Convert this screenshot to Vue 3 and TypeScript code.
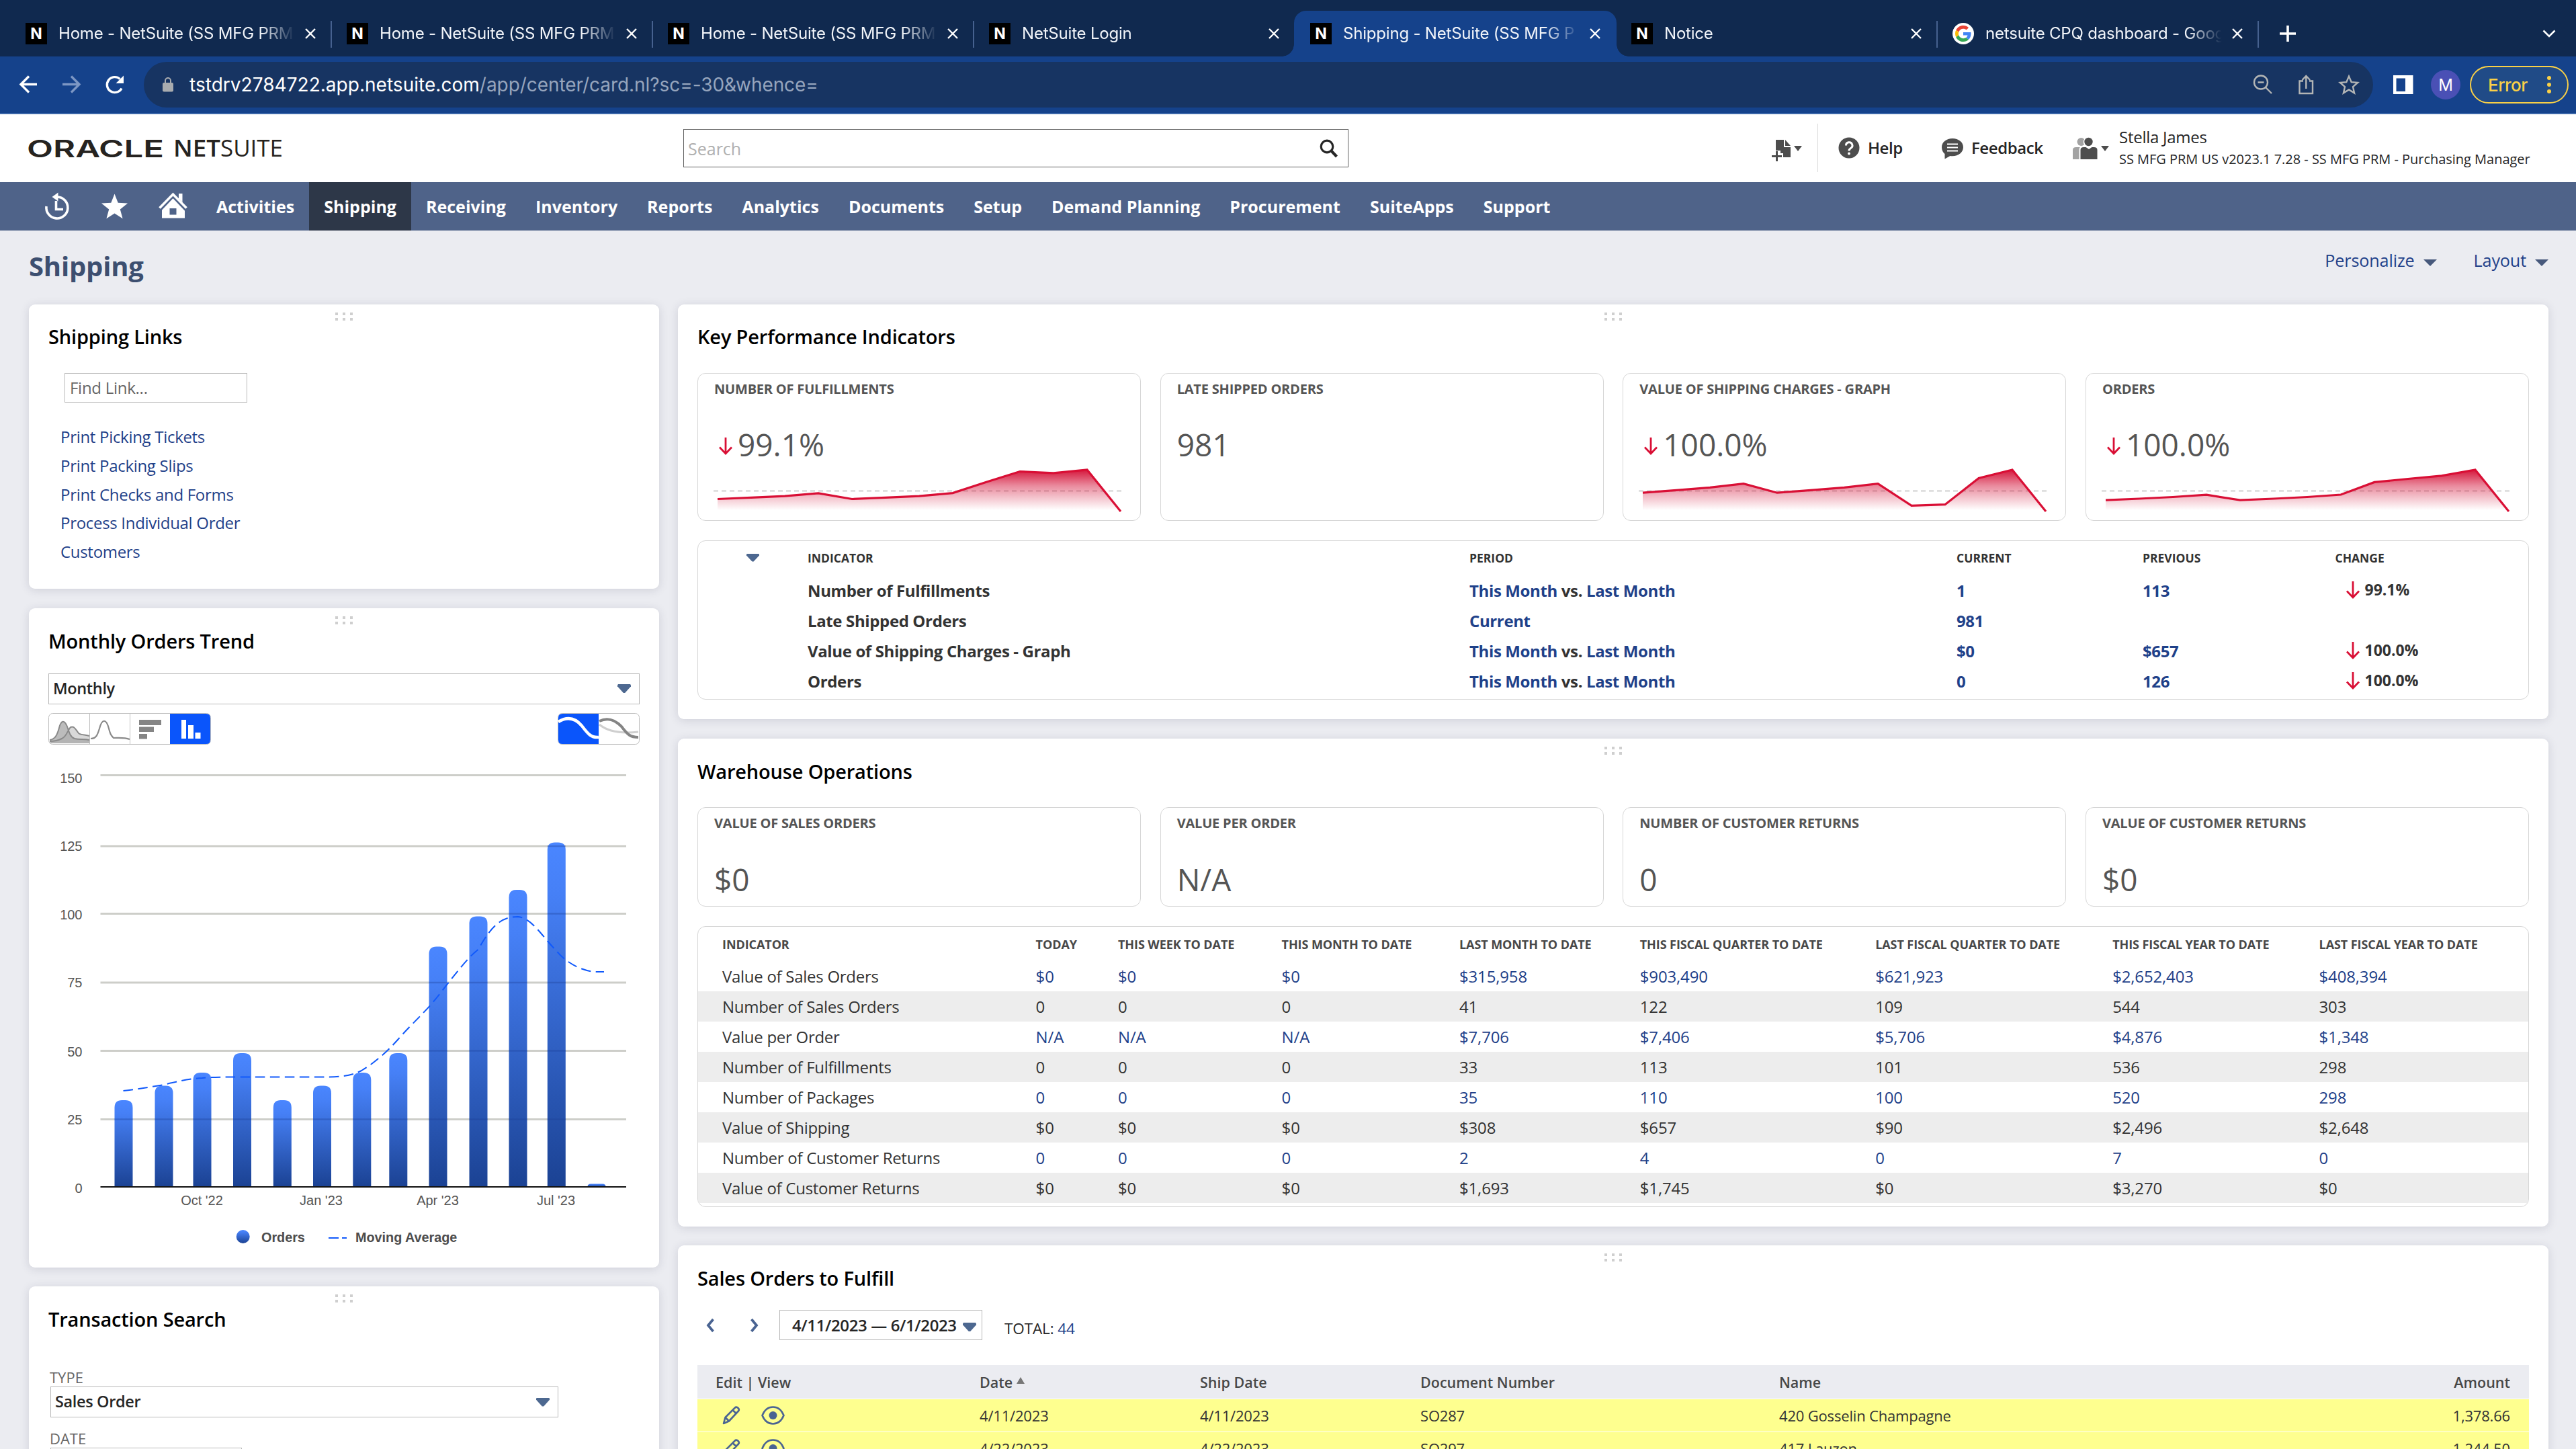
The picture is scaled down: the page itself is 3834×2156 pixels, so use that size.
<script setup lang="ts">
interface Tab { title: string; kind: 'n' | 'g'; active?: boolean; sep?: boolean }
const tabs: Tab[] = [
  { title: 'Home - NetSuite (SS MFG PRM', kind: 'n', sep: true },
  { title: 'Home - NetSuite (SS MFG PRM', kind: 'n', sep: true },
  { title: 'Home - NetSuite (SS MFG PRM', kind: 'n', sep: true },
  { title: 'NetSuite Login', kind: 'n' },
  { title: 'Shipping - NetSuite (SS MFG P', kind: 'n', active: true },
  { title: 'Notice', kind: 'n', sep: true },
  { title: 'netsuite CPQ dashboard - Goog', kind: 'g', sep: true },
]

const menu = ['Activities', 'Shipping', 'Receiving', 'Inventory', 'Reports', 'Analytics', 'Documents', 'Setup', 'Demand Planning', 'Procurement', 'SuiteApps', 'Support']
const links = ['Print Picking Tickets', 'Print Packing Slips', 'Print Checks and Forms', 'Process Individual Order', 'Customers']

/* Bar chart geometry: y is the grid line, ly the label baseline */
const gridLines = [
  { v: 150, y: 1153.5, ly: 1164.5 }, { v: 125, y: 1259, ly: 1265.5 }, { v: 100, y: 1359.5, ly: 1367.5 }, { v: 75, y: 1462, ly: 1468.5 },
  { v: 50, y: 1563.5, ly: 1571.5 }, { v: 25, y: 1665.5, ly: 1673 },
]
const bars = [
  [184, 1637], [244, 1615.5], [301, 1596], [360.5, 1567], [420.3, 1637], [479.5, 1615.5], [538.8, 1596],
  [592.8, 1567], [652, 1408.5], [712, 1363.5], [771, 1324], [828.3, 1253.5], [888, 1761.5],
].map(([x, y]) => ({ x, y }))
const barPath = (x: number, y: number): string => {
  const r = Math.min(11, 1766 - y)
  return `M${x - 13.5} 1766V${y + r}q0 ${-r} ${r} ${-r}h${27 - 2 * r}q${r} 0 ${r} ${r}V1766z`
}
const trend = 'M183.5 1623C204 1621 224 1617 244 1614C264 1609 282 1605 301 1604C315 1602.5 335 1602.5 360 1602.5H480C505 1602.5 520 1602 538 1593C558 1581 575 1566 592.5 1546.5C613 1523 634 1505 652 1482C680 1446 697 1424 712 1412.5C735 1370 752 1364 771 1364C792 1366 808 1395 828 1414.5C845 1436 872 1446 888 1446H899'
const xLabels = [{ t: "Oct '22", x: 300.5 }, { t: "Jan '23", x: 478 }, { t: "Apr '23", x: 651.5 }, { t: "Jul '23", x: 827.5 }]

/* KPI cards */
interface Kpi { title: string; value: string; down?: boolean; ys?: number[] }
const kpis: Kpi[] = [
  { title: 'NUMBER OF FULFILLMENTS', value: '99.1%', down: true, ys: [186.5, 184.4, 182.1, 177.8, 186.5, 184.4, 182.1, 177.6, 161.2, 145.5, 147.8, 143, 205] },
  { title: 'LATE SHIPPED ORDERS', value: '981' },
  { title: 'VALUE OF SHIPPING CHARGES - GRAPH', value: '100.0%', down: true, ys: [177.2, 173.4, 169.4, 163.7, 177.2, 173.4, 169.4, 163.7, 196.3, 194.7, 155.5, 143, 205] },
  { title: 'ORDERS', value: '100.0%', down: true, ys: [188.2, 186, 183.5, 180.2, 188.2, 186, 183.5, 180, 161.4, 156.5, 151.8, 143, 205] },
]
const sparkPoints = (ys: number[]): string => ys.map((y, i) => `${30 + i * 50},${y}`).join(' ')

const kpiRows = [
  { name: 'Number of Fulfillments', vs: true, cur: '1', prev: '113', chg: '99.1%' },
  { name: 'Late Shipped Orders', vs: false, cur: '981', prev: '', chg: '' },
  { name: 'Value of Shipping Charges - Graph', vs: true, cur: '$0', prev: '$657', chg: '100.0%' },
  { name: 'Orders', vs: true, cur: '0', prev: '126', chg: '100.0%' },
]

const whCards = [
  { title: 'VALUE OF SALES ORDERS', value: '$0' },
  { title: 'VALUE PER ORDER', value: 'N/A' },
  { title: 'NUMBER OF CUSTOMER RETURNS', value: '0' },
  { title: 'VALUE OF CUSTOMER RETURNS', value: '$0' },
]
const whHead = ['INDICATOR', 'TODAY', 'THIS WEEK TO DATE', 'THIS MONTH TO DATE', 'LAST MONTH TO DATE', 'THIS FISCAL QUARTER TO DATE', 'LAST FISCAL QUARTER TO DATE', 'THIS FISCAL YEAR TO DATE', 'LAST FISCAL YEAR TO DATE']
const whRows = [
  ['Value of Sales Orders', '$0', '$0', '$0', '$315,958', '$903,490', '$621,923', '$2,652,403', '$408,394'],
  ['Number of Sales Orders', '0', '0', '0', '41', '122', '109', '544', '303'],
  ['Value per Order', 'N/A', 'N/A', 'N/A', '$7,706', '$7,406', '$5,706', '$4,876', '$1,348'],
  ['Number of Fulfillments', '0', '0', '0', '33', '113', '101', '536', '298'],
  ['Number of Packages', '0', '0', '0', '35', '110', '100', '520', '298'],
  ['Value of Shipping', '$0', '$0', '$0', '$308', '$657', '$90', '$2,496', '$2,648'],
  ['Number of Customer Returns', '0', '0', '0', '2', '4', '0', '7', '0'],
  ['Value of Customer Returns', '$0', '$0', '$0', '$1,693', '$1,745', '$0', '$3,270', '$0'],
]
const orders = [
  ['4/11/2023', '4/11/2023', 'SO287', '420 Gosselin Champagne', '1,378.66'],
  ['4/22/2023', '4/22/2023', 'SO297', '417 Lauzon', '1,244.50'],
]
</script>

<template>
  <div class="page">
    <!-- Browser chrome -->
    <div class="tabstrip">
      <div v-for="(t, i) in tabs" :key="i" class="tab" :class="{ active: t.active, sep: t.sep }">
        <span v-if="t.kind === 'n'" class="fav">N</span>
        <svg v-else class="gfav" viewBox="0 0 32 32">
          <circle cx="16" cy="16" r="16" fill="#fff" />
          <g transform="translate(4 4) scale(.5)">
            <path fill="#EA4335" d="M24 9.5c3.54 0 6.71 1.22 9.21 3.6l6.85-6.85C35.9 2.38 30.47 0 24 0 14.62 0 6.51 5.38 2.56 13.22l7.98 6.19C12.43 13.72 17.74 9.5 24 9.5z" />
            <path fill="#4285F4" d="M46.98 24.55c0-1.57-.15-3.09-.38-4.55H24v9.02h12.94c-.58 2.96-2.26 5.48-4.78 7.18l7.73 6c4.51-4.18 7.09-10.36 7.09-17.65z" />
            <path fill="#FBBC05" d="M10.53 28.59c-.48-1.45-.76-2.99-.76-4.59s.27-3.14.76-4.59l-7.98-6.19C.92 16.46 0 20.12 0 24c0 3.88.92 7.54 2.56 10.78l7.97-6.19z" />
            <path fill="#34A853" d="M24 48c6.48 0 11.93-2.13 15.89-5.81l-7.73-6c-2.15 1.45-4.92 2.3-8.16 2.3-6.26 0-11.57-4.22-13.47-9.91l-7.98 6.19C6.51 42.62 14.62 48 24 48z" />
          </g>
        </svg>
        <span class="ttl">{{ t.title }}</span>
        <svg class="x" viewBox="0 0 16 16"><path d="M1 1l14 14M15 1L1 15" stroke="#fff" stroke-width="2.4" /></svg>
      </div>
      <svg class="plus" viewBox="0 0 26 26"><path d="M13 1v24M1 13h24" stroke="#fff" stroke-width="3.6" /></svg>
      <svg class="chev" viewBox="0 0 20 12"><path d="M1.500 1.500L10 10l8.500-8.500" fill="none" stroke="#fff" stroke-width="2.600" /></svg>
    </div>

    <div class="toolbar">
      <svg class="navbtns" viewBox="0 0 214 84">
        <g fill="none" stroke-width="3.4">
          <path d="M55 41.500H31M43 29.500L31 41.500l12 12" stroke="#fff" />
          <path d="M93 41.500h25M106 29.500l12 12-12 12" stroke="#7d97c4" />
          <path d="M181 47.500A11.500 11.500 0 1 1 178.500 33.500" stroke="#fff" />
        </g>
        <path d="M184 28.500v11.500h-11.500z" fill="#fff" />
      </svg>
      <div class="omni">
        <svg class="lock" viewBox="0 0 16 22"><rect y="8" width="16" height="13.500" rx="2" fill="#a9acaf" /><path d="M4 9V5a4 4 0 0 1 8 0v4" fill="none" stroke="#a9acaf" stroke-width="2" /></svg>
        <span class="url">tstdrv2784722.app.netsuite.com<i>/app/center/card.nl?sc=-30&amp;whence=</i></span>
        <svg class="omni-icons" viewBox="0 0 162 32">
          <g fill="none" stroke="#b3b5b5" stroke-width="2.400">
            <circle cx="14" cy="12.500" r="10" /><path d="M21 20l9 9M9.500 12.500h9" />
            <path d="M77 10.500h-5.500v18.500h19.500V10.500H86M81.300 22V3.500M75.500 9l5.800-6 5.800 6" />
            <path d="M145 3.500l3.700 8.700 9.400.8-7.100 6.200 2.100 9.200-8.100-4.900-8.100 4.900 2.100-9.200-7.100-6.200 9.400-.8z" />
          </g>
        </svg>
      </div>
      <svg class="panel" viewBox="0 0 30 28"><path d="M0 0h29.500v28H0zM4.500 4.500v19.500h13.500V4.500z" fill="#fff" fill-rule="evenodd" /></svg>
      <span class="avatar">M</span>
      <span class="error">Error<svg viewBox="0 0 6 28"><circle cx="3" cy="4" r="3" /><circle cx="3" cy="14" r="3" /><circle cx="3" cy="24" r="3" /></svg></span>
    </div>

    <!-- Application header -->
    <header class="apphead">
      <svg class="logo" viewBox="0 0 400 40">
        <g fill="#262320">
          <text x="-1" y="33.500" class="oracle" textLength="204" lengthAdjust="spacingAndGlyphs">ORACLE</text>
          <text x="217" y="33" class="net" textLength="70" lengthAdjust="spacingAndGlyphs">NET</text>
          <text x="287" y="33" class="suite" textLength="93" lengthAdjust="spacingAndGlyphs">SUITE</text>
        </g>
      </svg>
      <div class="search">
        <span>Search</span>
        <svg viewBox="0 0 28 28"><circle cx="11" cy="11" r="8.800" fill="none" stroke="#262626" stroke-width="3.200" /><path d="M17 17l8.500 9" stroke="#262626" stroke-width="4.200" /></svg>
      </div>
      <div class="quick">
        <svg class="q-new" viewBox="0 0 46 34">
          <path d="M6 1h12v11h10v15H17v-6h-4v-4H6z" fill="#4d4d4d" /><path d="M20 1l8 9h-8z" fill="#4d4d4d" />
          <path d="M7.500 18v15M0 25.500h15" stroke="#4d4d4d" stroke-width="3" /><path d="M33 10h12l-6 8z" fill="#4d4d4d" />
        </svg>
        <i class="vline"></i>
        <svg class="q-help" viewBox="0 0 32 32"><circle cx="16" cy="16" r="15.500" fill="#4d4d4d" /><path d="M11.500 12.500a4.700 4.700 0 1 1 7 4c-1.800 1.200-2.500 2-2.500 4" fill="none" stroke="#fff" stroke-width="3" /><circle cx="16" cy="24.500" r="2" fill="#fff" /></svg>
        <span class="q-txt q-h">Help</span>
        <svg class="q-fb" viewBox="0 0 34 32"><path d="M17 1C8 1 1 6.500 1 14c0 4.500 2 8 4.500 10v7.500l8-4.500c1 .2 2 .3 3.500.3 9 0 16-5.800 16-13.300S26 1 17 1z" fill="#4d4d4d" /><path d="M9 9.500h16M9 14.500h16M9 19.500h16" stroke="#fff" stroke-width="2" /></svg>
        <span class="q-txt q-f">Feedback</span>
        <svg class="q-ppl" viewBox="0 0 56 34">
          <circle cx="12.500" cy="7" r="6" fill="#a3a3a3" /><path d="M0 33V19q0-4 5-4h10v18z" fill="#a3a3a3" />
          <circle cx="23.500" cy="7.500" r="7.800" fill="#fff" /><path d="M9.500 34V19q0-6 6-6h20v21z" fill="#fff" />
          <circle cx="23.500" cy="7" r="6.200" fill="#4d4d4d" /><path d="M11.500 33V19q0-4 5-4h3l4.500 3 4.500-3h3q5 0 5 4v14z" fill="#4d4d4d" />
          <path d="M42 13h12l-6 8z" fill="#4d4d4d" />
        </svg>
        <div class="who"><span>Stella James</span><span class="role">SS MFG PRM US v2023.1 7.28 - SS MFG PRM - Purchasing Manager</span></div>
      </div>
    </header>

    <nav class="menu">
      <svg class="m-icons" viewBox="0 0 300 72">
        <path d="M69 36A16 16 0 1 0 85.500 22" fill="none" stroke="#fff" stroke-width="3.600" />
        <path d="M77.500 22l9-6.500v13z" fill="#fff" /><path d="M83.500 28v12.500H94" fill="none" stroke="#fff" stroke-width="3.600" />
        <path d="M170.500 17.500l5.200 13.300 14.300.7-11.200 8.900 3.800 13.800-12.100-7.800-12.100 7.800 3.800-13.800L151 31.500l14.300-.7z" fill="#fff" />
        <path d="M257.500 21.500L275 40v13.500H241V40z" fill="#fff" /><path d="M237.500 40l20-21 20 21" fill="none" stroke="#4f6389" stroke-width="7" /><path d="M237.500 38.500l20-20.500 20 20.500" fill="none" stroke="#fff" stroke-width="3.600" /><path d="M266 17h5.500v13l-5.500-5.500z" fill="#fff" /><path d="M252.500 39h10v9.500h-10z" fill="#4f6389" />
      </svg>
      <span v-for="m in menu" :key="m" class="mi" :class="{ on: m === 'Shipping' }">{{ m }}</span>
    </nav>

    <div class="titlebar">
      <h1>Shipping</h1>
      <span class="tb">Personalize<svg viewBox="0 0 20 10"><path d="M0 0h20L10 10z" fill="#47597c" /></svg></span>
      <span class="tb">Layout<svg viewBox="0 0 20 10"><path d="M0 0h20L10 10z" fill="#47597c" /></svg></span>
    </div>

    <main class="cols">
      <div class="col left">
        <section class="card c-links">
          <i class="grip"></i>
          <h2>Shipping Links</h2>
          <div class="find">Find Link...</div>
          <a v-for="l in links" :key="l">{{ l }}</a>
        </section>

        <section class="card c-trend">
          <i class="grip"></i>
          <h2>Monthly Orders Trend</h2>
          <div class="select"><b>Monthly</b><i class="dd"></i></div>
          <div class="btns">
            <svg class="b4" viewBox="0 0 242 47">
              <rect x=".5" y=".5" width="241" height="46" rx="6" fill="#fff" stroke="#bfbfbf" />
              <path d="M2 40C10 39 13 33 16 22c3-12 8-12 12-2 3 9 5 16 11 18 8 2 14 0 22 2v5H3z" fill="#bcbcbc" />
              <path d="M2 42c10 0 14-2 18-4 8-4 8-12 13-17 6-2 8 4 12 9 4 3 10 2 16 4v11H4z" fill="#aaa" fill-opacity=".45" />
              <path d="M2 40C10 39 13 33 16 22c3-12 8-12 12-2 3 9 5 16 11 18 8 2 14 0 22 2M2 42c10 0 14-2 18-4 8-4 8-12 13-17 6-2 8 4 12 9 4 3 10 2 16 4" fill="none" stroke="#8a8a8a" stroke-width="2" />
              <path d="M63 38c8 0 10-5 13-15 4-15 10-15 14 0 2 8 3 10 7 14 8 0 16-1 24 2" fill="none" stroke="#8a8a8a" stroke-width="2.200" />
              <path d="M61.500 1v45M121.500 1v45" stroke="#bfbfbf" />
              <path d="M135 10h33v8h-33zM135 20.500h22v7.500h-22zM135 31h12v7.500h-12z" fill="#858585" />
              <path d="M181 1h54q6 0 6 6v33q0 6-6 6h-54z" fill="#0a55fb" />
              <path d="M198 10h7v28h-7zM208 18h8v20h-8zM218.500 29h8v9h-8z" fill="#fff" />
            </svg>
            <svg class="b2" viewBox="0 0 122 47">
              <rect x=".5" y=".5" width="121" height="46" rx="6" fill="#fff" stroke="#bfbfbf" />
              <path d="M61 1H7q-6 0-6 6v33q0 6 6 6h54z" fill="#0a55fb" />
              <path d="M1 13c13-8 25-6 35 6 9 12 14 18 25 17" fill="none" stroke="#fff" stroke-width="4.500" />
              <path d="M62 17c12 10 30 14 58 11" fill="none" stroke="#cfcfcf" stroke-width="3" />
              <path d="M62 12c13-6 23-2 33 8 9 12 13 16 25 16" fill="none" stroke="#858585" stroke-width="4" />
            </svg>
          </div>
          <svg class="chart" viewBox="43 1120 938 766">
            <defs>
              <linearGradient id="bar" x1="0" y1="0" x2="0" y2="1"><stop offset="0" stop-color="#4a86ff" /><stop offset=".15" stop-color="#4680f6" /><stop offset="1" stop-color="#1b4293" /></linearGradient>
            </defs>
            <g v-for="g in gridLines" :key="g.v">
              <path :d="`M149.500 ${g.y}H932`" stroke="#cdcec9" stroke-width="3" />
              <text x="122.500" :y="g.ly" text-anchor="end" class="ax">{{ g.v }}</text>
            </g>
            <text x="122.500" y="1774.500" text-anchor="end" class="ax">0</text>
            <path v-for="b in bars" :key="b.x" :d="barPath(b.x, b.y)" fill="url(#bar)" />
            <template v-for="b in bars" :key="'o' + b.x">
              <template v-for="g in gridLines" :key="g.v">
                <path v-if="g.y > b.y + 4" :d="`M${b.x - 13.5} ${g.y}h27`" stroke="#1d3f94" stroke-opacity=".35" stroke-width="2.500" />
              </template>
            </template>
            <path d="M149.500 1766H932" stroke="#111" stroke-width="2.200" />
            <path :d="trend" fill="none" stroke="#1059fb" stroke-width="2" stroke-dasharray="14.500 7.500" />
            <text v-for="l in xLabels" :key="l.t" :x="l.x" y="1792.500" text-anchor="middle" class="ax">{{ l.t }}</text>
            <circle cx="361.700" cy="1840" r="10" fill="url(#bar)" />
            <text x="389" y="1848" class="lg">Orders</text>
            <path d="M489 1842h27" stroke="#1059fb" stroke-width="2" stroke-dasharray="15 5" />
            <text x="529" y="1848" class="lg">Moving Average</text>
          </svg>
        </section>

        <section class="card c-tran">
          <i class="grip"></i>
          <h2>Transaction Search</h2>
          <label class="first">TYPE</label>
          <div class="select"><b>Sales Order</b><i class="dd"></i></div>
          <label class="second">DATE</label>
          <div class="date"></div>
        </section>
      </div>

      <div class="col right">
        <section class="card c-kpi">
          <i class="grip"></i>
          <h2>Key Performance Indicators</h2>
          <div class="kgrid tall">
            <div v-for="k in kpis" :key="k.title" class="kcard">
              <h3>{{ k.title }}</h3>
              <div class="val"><svg v-if="k.down" viewBox="0 0 20 26"><path d="M10 0v24M1 14.500l9 9.500 9-9.500" fill="none" stroke="#d90f35" stroke-width="2.800" /></svg>{{ k.value }}</div>
              <svg v-if="k.ys" class="spark" viewBox="0 135 660 83">
                <defs><linearGradient id="rf" gradientUnits="userSpaceOnUse" x1="0" y1="143" x2="0" y2="203"><stop offset="0" stop-color="#d5183d" /><stop offset=".4" stop-color="#d5183d" stop-opacity=".5" /><stop offset="1" stop-color="#d5183d" stop-opacity="0" /></linearGradient></defs>
                <path d="M24 174.500H636" stroke="#cfcfcf" stroke-width="2.200" stroke-dasharray="7 5" />
                <polygon :points="`30,205 ${sparkPoints(k.ys)}`" fill="url(#rf)" />
                <polyline :points="sparkPoints(k.ys)" fill="none" stroke="#d90f35" stroke-width="3.200" />
              </svg>
            </div>
          </div>
          <div class="ktable">
            <div class="kr kh"><i class="dd"></i><span>INDICATOR</span><span>PERIOD</span><span>CURRENT</span><span>PREVIOUS</span><span>CHANGE</span></div>
            <div v-for="r in kpiRows" :key="r.name" class="kr">
              <i></i><span>{{ r.name }}</span>
              <span v-if="r.vs"><em>This Month</em> <b class="vs">vs.</b> <em>Last Month</em></span><span v-else><em>Current</em></span>
              <em>{{ r.cur }}</em><em>{{ r.prev }}</em>
              <span class="chg"><template v-if="r.chg"><svg viewBox="0 0 20 26"><path d="M10 0v24M1 14.500l9 9.500 9-9.500" fill="none" stroke="#d90f35" stroke-width="2.800" /></svg>{{ r.chg }}</template></span>
            </div>
          </div>
        </section>

        <section class="card c-wh">
          <i class="grip"></i>
          <h2>Warehouse Operations</h2>
          <div class="kgrid">
            <div v-for="k in whCards" :key="k.title" class="kcard"><h3>{{ k.title }}</h3><div class="val">{{ k.value }}</div></div>
          </div>
          <div class="wtable">
            <div class="wr wh"><span v-for="h in whHead" :key="h">{{ h }}</span></div>
            <div v-for="(r, i) in whRows" :key="i" class="wr" :class="{ odd: i % 2 }"><span v-for="(c, j) in r" :key="j" :class="{ lk: i % 2 === 0 && j > 0, name: j === 0 }">{{ c }}</span></div>
          </div>
        </section>

        <section class="card c-so">
          <i class="grip"></i>
          <h2>Sales Orders to Fulfill</h2>
          <div class="pager">
            <svg viewBox="0 0 80 20"><path d="M10.500 1l-7.500 9 7.500 9M67.500 1l7.500 9-7.500 9" fill="none" stroke="#4a6492" stroke-width="3.800" /></svg>
            <div class="range"><b>4/11/2023 — 6/1/2023</b><i class="dd"></i></div>
            <span class="total">TOTAL: <a>44</a></span>
          </div>
          <div class="sr sh"><span>Edit | View</span><span>Date<i class="up"></i></span><span>Ship Date</span><span>Document Number</span><span>Name</span><span class="amt">Amount</span></div>
          <div v-for="o in orders" :key="o[2]" class="sr">
            <svg class="ev" viewBox="0 0 96 28">
              <g fill="none" stroke="#4a6492" stroke-width="2.600" stroke-linejoin="round"><path d="M2 26l2.500-9L19 2.500q2-2 4.500.5 2.500 2.500.5 4.500L10 22.500zM15.500 6l6 6M4.500 17l5.500 5.500" /><path d="M59.500 14C63 5.500 69 1.500 75.500 1.500S88 5.500 91.500 14C88 22.500 82 26.500 75.500 26.500S63 22.500 59.500 14z" /></g>
              <circle cx="75.500" cy="14" r="6" fill="#4a6492" />
            </svg>
            <span v-for="(c, j) in o" :key="j" :class="{ amt: j === 4 }">{{ c }}</span>
          </div>
        </section>
      </div>
    </main>
  </div>
</template>

<style>
body { margin: 0; overflow: hidden; }
</style>

<style scoped>
* { box-sizing: border-box; }
i { font-style: normal; }
em { font-style: normal; color: #1f4189; }
.page { width: 3834px; height: 2156px; overflow: hidden; background: #ebecf1; font-family: "Open Sans", "Noto Sans", sans-serif; color: #333; display: flex; flex-direction: column; white-space: nowrap; }
.page > * { flex: none; }
svg { display: block; flex: none; overflow: visible; }

.tabstrip { height: 84px; background: #10294f; display: flex; padding: 16px 30px 0 15px; font-family: Inter, Roboto, sans-serif; }
.tab { width: 478px; height: 68px; display: flex; align-items: center; padding-left: 23px; position: relative; flex: none; color: #f1f4f9; }
.tab.sep::after { content: ""; position: absolute; right: -1px; top: 15px; width: 2px; height: 40px; background: #46618f; }
.tab.active { background: #15428b; border-radius: 18px 18px 0 0; width: 480px; margin-left: -1px; margin-right: -1px; padding-left: 24px; }
.tab.active::before, .tab.active::after { content: ""; position: absolute; bottom: 0; width: 18px; height: 18px; background: radial-gradient(circle at 0 0, transparent 17.5px, #15428b 18px); left: -18px; }
.tab.active::after { left: auto; right: -18px; background: radial-gradient(circle at 100% 0, transparent 17.5px, #15428b 18px); }
.fav { width: 32px; height: 32px; background: #000; color: #fff; font-weight: 700; font-size: 23px; line-height: 33px; text-align: center; flex: none; }
.gfav { width: 32px; height: 32px; }
.ttl { margin-left: 17px; width: 352px; font-size: 24px; line-height: 34px; letter-spacing: -.2px; -webkit-mask-image: linear-gradient(90deg, #000 300px, transparent 352px); mask-image: linear-gradient(90deg, #000 300px, transparent 352px); }
.x { width: 16px; height: 16px; margin-left: 15px; }
.plus { width: 26px; height: 26px; margin: 21px 0 0 31px; }
.chev { width: 20px; height: 12px; margin: 28px 0 0 auto; }

.toolbar { height: 86px; background: #15428b; border-bottom: 2px solid #3b66a8; display: flex; align-items: center; font-family: Inter, Roboto, sans-serif; }
.navbtns { width: 214px; height: 84px; }
.omni { width: 3318px; height: 68px; border-radius: 34px; background: #173462; display: flex; align-items: center; padding: 0 19px 0 28px; }
.lock { width: 16px; height: 22px; }
.url { margin-left: 24px; font-size: 28px; letter-spacing: .03px; color: #fff; line-height: 40px; }
.url i { color: #96a5bd; letter-spacing: -.06px; }
.omni-icons { width: 162px; height: 32px; margin-left: auto; }
.panel { width: 30px; height: 28px; margin-left: 30px; }
.avatar { width: 44px; height: 44px; border-radius: 50%; background: #4a50b5; color: #fff; font-size: 24px; line-height: 45px; text-align: center; margin-left: 26px; }
.error { width: 147px; height: 56px; border: 2px solid #f9d047; border-radius: 28px; background: #204b87; color: #f9d047; font-size: 26px; letter-spacing: -.5px; font-weight: 500; display: flex; align-items: center; padding: 0 24px 0 25px; justify-content: space-between; margin-left: 14px; }
.error svg { width: 6px; height: 28px; fill: #f9d047; }

.apphead { height: 101px; background: #fff; display: flex; align-items: flex-start; }
.logo { width: 400px; height: 40px; margin: 30px 0 0 41px; }
.oracle { font: 560 36px Inter, sans-serif; }
.net { font: 600 34px "Open Sans", sans-serif; }
.suite { font: 400 34px "Open Sans", sans-serif; }
.search { width: 990px; height: 57px; border: 1px solid #5e5e5e; margin: 22px 0 0 576px; display: flex; align-items: center; justify-content: space-between; padding: 0 14px 0 6px; font-size: 25px; color: #b0b0b0; }
.search svg { width: 28px; height: 28px; }
.quick { display: flex; margin-left: 630px; align-items: flex-start; }
.q-new { width: 46px; height: 34px; margin-top: 37px; }
.vline { width: 1px; height: 72px; background: #d9d9d9; margin: 14px 0 0 22px; }
.q-help { width: 32px; height: 32px; margin: 34px 12px 0 30px; }
.q-txt { font-size: 24px; font-weight: 600; letter-spacing: -.42px; line-height: 34px; margin-top: 33px; color: #262626; }
.q-h { width: 52px; }
.q-f { width: 107px; }
.q-fb { width: 34px; height: 32px; margin: 35px 11px 0 57px; }
.q-ppl { width: 56px; height: 34px; margin: 34px 13px 0 44px; }
.who { display: flex; flex-direction: column; font-size: 24px; letter-spacing: -.27px; line-height: 34px; margin-top: 17px; color: #262626; }
.who .role { font-size: 20px; line-height: 31px; letter-spacing: -.02px; }

.menu { height: 72px; background: #4f6389; display: flex; }
.m-icons { width: 300px; height: 72px; }
.mi { padding: 0 22px; color: #fff; font-weight: 700; font-size: 25px; letter-spacing: .01px; line-height: 72px; }
.mi.on { background: #2d3748; }

.titlebar { height: 110px; display: flex; padding: 0 41px 0 43px; }
h1 { margin: 26px auto 0 0; font-size: 40px; letter-spacing: -.2px; line-height: 54px; font-weight: 700; color: #3d4f70; }
.tb { font-size: 25.200px; letter-spacing: -.15px; line-height: 36px; margin: 25px 0 0 55px; color: #1f4189; display: flex; align-items: center; height: 38px; }
.tb svg { width: 20px; height: 10px; margin: 8px 0 0 13px; }

.cols { display: flex; gap: 28px; padding-left: 43px; align-items: flex-start; }
.col { display: flex; flex-direction: column; gap: 28.500px; }
.left { width: 938px; }
.right { width: 2784px; }
.card { background: #fff; border-radius: 9px; box-shadow: 0 2px 14px rgba(50, 50, 80, .15); position: relative; flex: none; overflow: clip; overflow-clip-margin: 40px; }
.grip { position: absolute; left: 50%; top: 12px; width: 26px; height: 13px; background: conic-gradient(#cfcfcf 0 0) 0 0 / 4px 4px no-repeat, conic-gradient(#cfcfcf 0 0) 11px 0 / 4px 4px no-repeat, conic-gradient(#cfcfcf 0 0) 22px 0 / 4px 4px no-repeat, conic-gradient(#cfcfcf 0 0) 0 8px / 4px 4px no-repeat, conic-gradient(#cfcfcf 0 0) 11px 8px / 4px 4px no-repeat, conic-gradient(#cfcfcf 0 0) 22px 8px / 4px 4px no-repeat; margin-left: -13px; }
h2 { margin: 0; padding: 29px 0 0 29px; font-size: 29px; letter-spacing: -.17px; line-height: 40px; font-weight: 600; color: #000; }
.c-links h2, .c-kpi h2 { padding-top: 28px; }
.dd { width: 20px; height: 13px; background: #4d6890; clip-path: polygon(5% 0, 95% 0, 100% 12%, 100% 25%, 56% 100%, 44% 100%, 0 25%, 0 12%); flex: none; }

.c-links { height: 423px; display: flex; flex-direction: column; }
.find { width: 272px; height: 44px; border: 1px solid #b8b8b8; margin: 34px 0 30px 53px; padding-left: 7px; font-size: 24px; letter-spacing: -.27px; line-height: 42px; color: #666; }
.c-links a { margin-left: 47px; font-size: 24px; letter-spacing: -.3px; line-height: 42.800px; color: #1f4189; }

.c-trend { height: 981px; }
.select { height: 46px; border: 1px solid #b8b8b8; margin: 28px 29px 0; display: flex; align-items: center; justify-content: space-between; padding: 0 12px 0 6px; font-size: 23.500px; letter-spacing: -.35px; color: #262626; line-height: 43px; }
.select b, .range b { font-weight: 600; }
.btns { display: flex; justify-content: space-between; margin: 13px 29px 0; height: 47px; }
.b4 { width: 242px; height: 47px; }
.b2 { width: 122px; height: 47px; }
.chart { width: 938px; height: 766px; margin-top: 12px; }
.ax { font: 20px "Liberation Sans", Arial, sans-serif; fill: #555; }
.lg { font: 700 19.800px "Liberation Sans", Arial, sans-serif; fill: #4d4d4d; }

.c-tran { height: 400px; display: flex; flex-direction: column; }
.c-tran label { font-size: 22px; line-height: 30px; margin-left: 31px; color: #666; }
.c-tran .first { margin-top: 51px; }
.c-tran .second { margin-top: 16px; }
.c-tran .select { margin: -1px 0 0 32px; width: 756px; }
.c-tran .select b { margin-top: -2px; }
.date { width: 285px; height: 46px; border: 1px solid #b8b8b8; margin: -1px 0 0 32px; }

.c-kpi { height: 617px; }
.c-wh { height: 726px; }
.c-so { height: 400px; }
.kgrid { display: grid; grid-template-columns: repeat(4, 660px); justify-content: space-between; margin: 33.500px 29px 0; }
.kcard { height: 148px; border: 1px solid #d6d6d6; border-radius: 12px; display: flex; flex-direction: column; overflow: hidden; }
.tall .kcard { height: 220px; }
h3 { margin: 10px 0 0 24px; font-size: 20px; letter-spacing: -.2px; line-height: 26px; font-weight: 700; color: #555; }
.val { margin: 40px 0 0 24px; font-size: 46px; line-height: 60px; color: #555; display: flex; align-items: center; }
.tall .val { margin-top: 39px; }
.val svg { width: 20px; height: 26px; margin: 7px 8px 0 7px; }
.spark { width: 660px; height: 83px; margin: 0 0 0 -1px; }
.ktable { margin: 29px 29px 0; height: 237px; border: 1px solid #d6d6d6; border-radius: 12px; }
.kr { display: grid; grid-template-columns: 163px 985px 725px 277px 286.500px 1fr; height: 45px; line-height: 45px; font-size: 24px; letter-spacing: -.37px; font-weight: 700; }
.kr em, .kr .vs { font-weight: 700; }
.kh { font-size: 17.500px; height: 51px; line-height: 51px; letter-spacing: 0; }
.kh .dd { margin: 19px 0 0 72px; width: 19px; height: 12px; }
.chg { display: flex; margin-left: 16px; line-height: 43px; font-size: 23px; letter-spacing: 0; }
.chg svg { width: 20px; height: 26px; margin: 9px 8px 0 0; }

.wtable { margin: 29px 29px 0; height: 418px; border: 1px solid #d6d6d6; border-radius: 12px; overflow: hidden; }
.wr { display: grid; grid-template-columns: 466.600px 122.400px 243.600px 264.400px 268.800px 350.400px 353px 307.400px 1fr; padding-left: 36px; height: 45px; line-height: 45.500px; font-size: 24px; letter-spacing: -.16px; }
.wr.wh { font-size: 18px; font-weight: 700; height: 51px; line-height: 53px; color: #484848; letter-spacing: -.08px; }
.name { letter-spacing: -.28px; }
.odd { background: #ededed; }
.lk { color: #1f4189; }

.pager { display: flex; margin: 27px 0 0 29px; height: 45px; }
.pager svg { width: 80px; height: 20px; margin: 13px -2px 0 13px; }
.range { width: 302px; height: 45px; border: 1px solid #b8b8b8; margin-left: 31px; padding-left: 18px; font-size: 24px; letter-spacing: -.38px; line-height: 44px; color: #262626; display: flex; }
.range .dd { margin: 18px 8px 0 auto; }
.total { font-size: 22.500px; letter-spacing: -.1px; line-height: 33px; margin: 11px 0 0 33px; color: #262626; }
.total a { color: #1f4189; }
.sr { display: grid; grid-template-columns: 393px 328px 328px 534px 1fr 300px; margin: 1px 29px 0; padding: 0 28px 0 27px; background: #feff8f; height: 48px; line-height: 49px; font-size: 22px; letter-spacing: -.18px; }
.sr.sh { background: #ebecf1; height: 50px; line-height: 51px; margin-top: 37px; font-weight: 600; color: #484848; font-size: 21.500px; letter-spacing: 0; }
.amt { text-align: right; }
.up { display: inline-block; border: 6px solid transparent; border-top: 0; border-bottom: 10px solid #777; margin: 0 0 6px 6px; }
.ev { width: 96px; height: 28px; margin: 10px 0 0 10px; }
</style>
